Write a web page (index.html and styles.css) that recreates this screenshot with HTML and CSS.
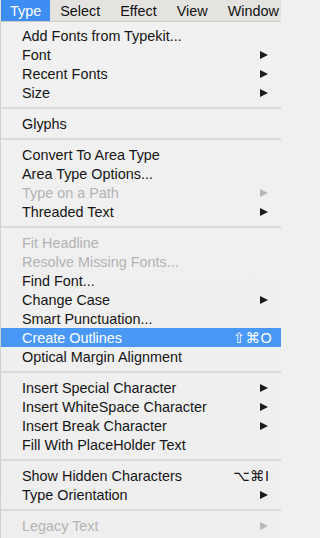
FILE: index.html
```html
<!DOCTYPE html>
<html>
<head>
<meta charset="utf-8">
<link rel="stylesheet" href="styles.css">
</head>
<body>
<div class="menubar">
  <span class="mb-item active">Type</span>
  <span class="mb-item">Select</span>
  <span class="mb-item">Effect</span>
  <span class="mb-item">View</span>
  <span class="mb-item">Window</span>
</div>
<div class="menu">
  <div class="row"><span class="label">Add Fonts from Typekit...</span></div>
  <div class="row"><span class="label">Font</span><span class="arrow"></span></div>
  <div class="row"><span class="label">Recent Fonts</span><span class="arrow"></span></div>
  <div class="row"><span class="label">Size</span><span class="arrow"></span></div>
  <div class="sep"></div>
  <div class="row"><span class="label">Glyphs</span></div>
  <div class="sep"></div>
  <div class="row"><span class="label">Convert To Area Type</span></div>
  <div class="row"><span class="label">Area Type Options...</span></div>
  <div class="row disabled"><span class="label">Type on a Path</span><span class="arrow"></span></div>
  <div class="row"><span class="label">Threaded Text</span><span class="arrow"></span></div>
  <div class="sep"></div>
  <div class="row disabled"><span class="label">Fit Headline</span></div>
  <div class="row disabled"><span class="label">Resolve Missing Fonts...</span></div>
  <div class="row"><span class="label">Find Font...</span></div>
  <div class="row"><span class="label">Change Case</span><span class="arrow"></span></div>
  <div class="row"><span class="label">Smart Punctuation...</span></div>
  <div class="row selected"><span class="label">Create Outlines</span><span class="shortcut">⇧⌘O</span></div>
  <div class="row"><span class="label">Optical Margin Alignment</span></div>
  <div class="sep"></div>
  <div class="row"><span class="label">Insert Special Character</span><span class="arrow"></span></div>
  <div class="row"><span class="label">Insert WhiteSpace Character</span><span class="arrow"></span></div>
  <div class="row"><span class="label">Insert Break Character</span><span class="arrow"></span></div>
  <div class="row"><span class="label">Fill With PlaceHolder Text</span></div>
  <div class="sep"></div>
  <div class="row"><span class="label">Show Hidden Characters</span><span class="shortcut alt">⌥⌘I</span></div>
  <div class="row"><span class="label">Type Orientation</span><span class="arrow"></span></div>
  <div class="sep"></div>
  <div class="row disabled"><span class="label">Legacy Text</span><span class="arrow"></span></div>
</div>
</body>
</html>
```
FILE: styles.css
```css
html, body {
  margin: 0;
  padding: 0;
  width: 281px;
  height: 538px;
  overflow: hidden;
  background: #f0f0f0;
  font-family: "Liberation Sans", Arial, sans-serif;
  color: #151515;
}

.menubar {
  display: flex;
  height: 21px;
  background: #e5e3e0;
  border-bottom: 1px solid #cfcdca;
  align-items: stretch;
  padding-left: 1px;
}

.mb-item {
  display: flex;
  align-items: center;
  font-size: 14.4px;
  padding: 0 10px;
  color: #111111;
}

.mb-item.active {
  background: #3d8df2;
  color: #ffffff;
  padding: 0 9px 0 9px;
}

.menu {
  padding-top: 4px;
  background: linear-gradient(#f1f1f1, #eeeeee);
  border-left: 1px solid #d0d0d0;
  height: 520px;
}

.row {
  display: flex;
  align-items: center;
  height: 19px;
  padding-left: 21px;
  padding-right: 13px;
  font-size: 14.4px;
  white-space: nowrap;
}

.label {
  flex: 1;
}

.row.disabled {
  color: #b3b3b3;
}

.row.selected {
  background: #4a98f6;
  color: #ffffff;
}

.arrow {
  width: 0;
  height: 0;
  border-top: 4.5px solid transparent;
  border-bottom: 4.5px solid transparent;
  border-left: 8px solid #1b1b1b;
}

.row.disabled .arrow {
  border-left-color: #b8b8b8;
}

.shortcut {
  width: 41px;
  margin-right: -6px;
  font-family: "Liberation Sans", "DejaVu Sans", sans-serif;
  font-size: 14.4px;
  letter-spacing: 0.5px;
  text-align: left;
}

.shortcut.alt {
  margin-right: -3px;
  width: 38px;
}

.sep {
  height: 12px;
  display: flex;
  align-items: center;
}

.sep::before {
  content: "";
  flex: 1;
  height: 2px;
  background: #dadada;
}
```
